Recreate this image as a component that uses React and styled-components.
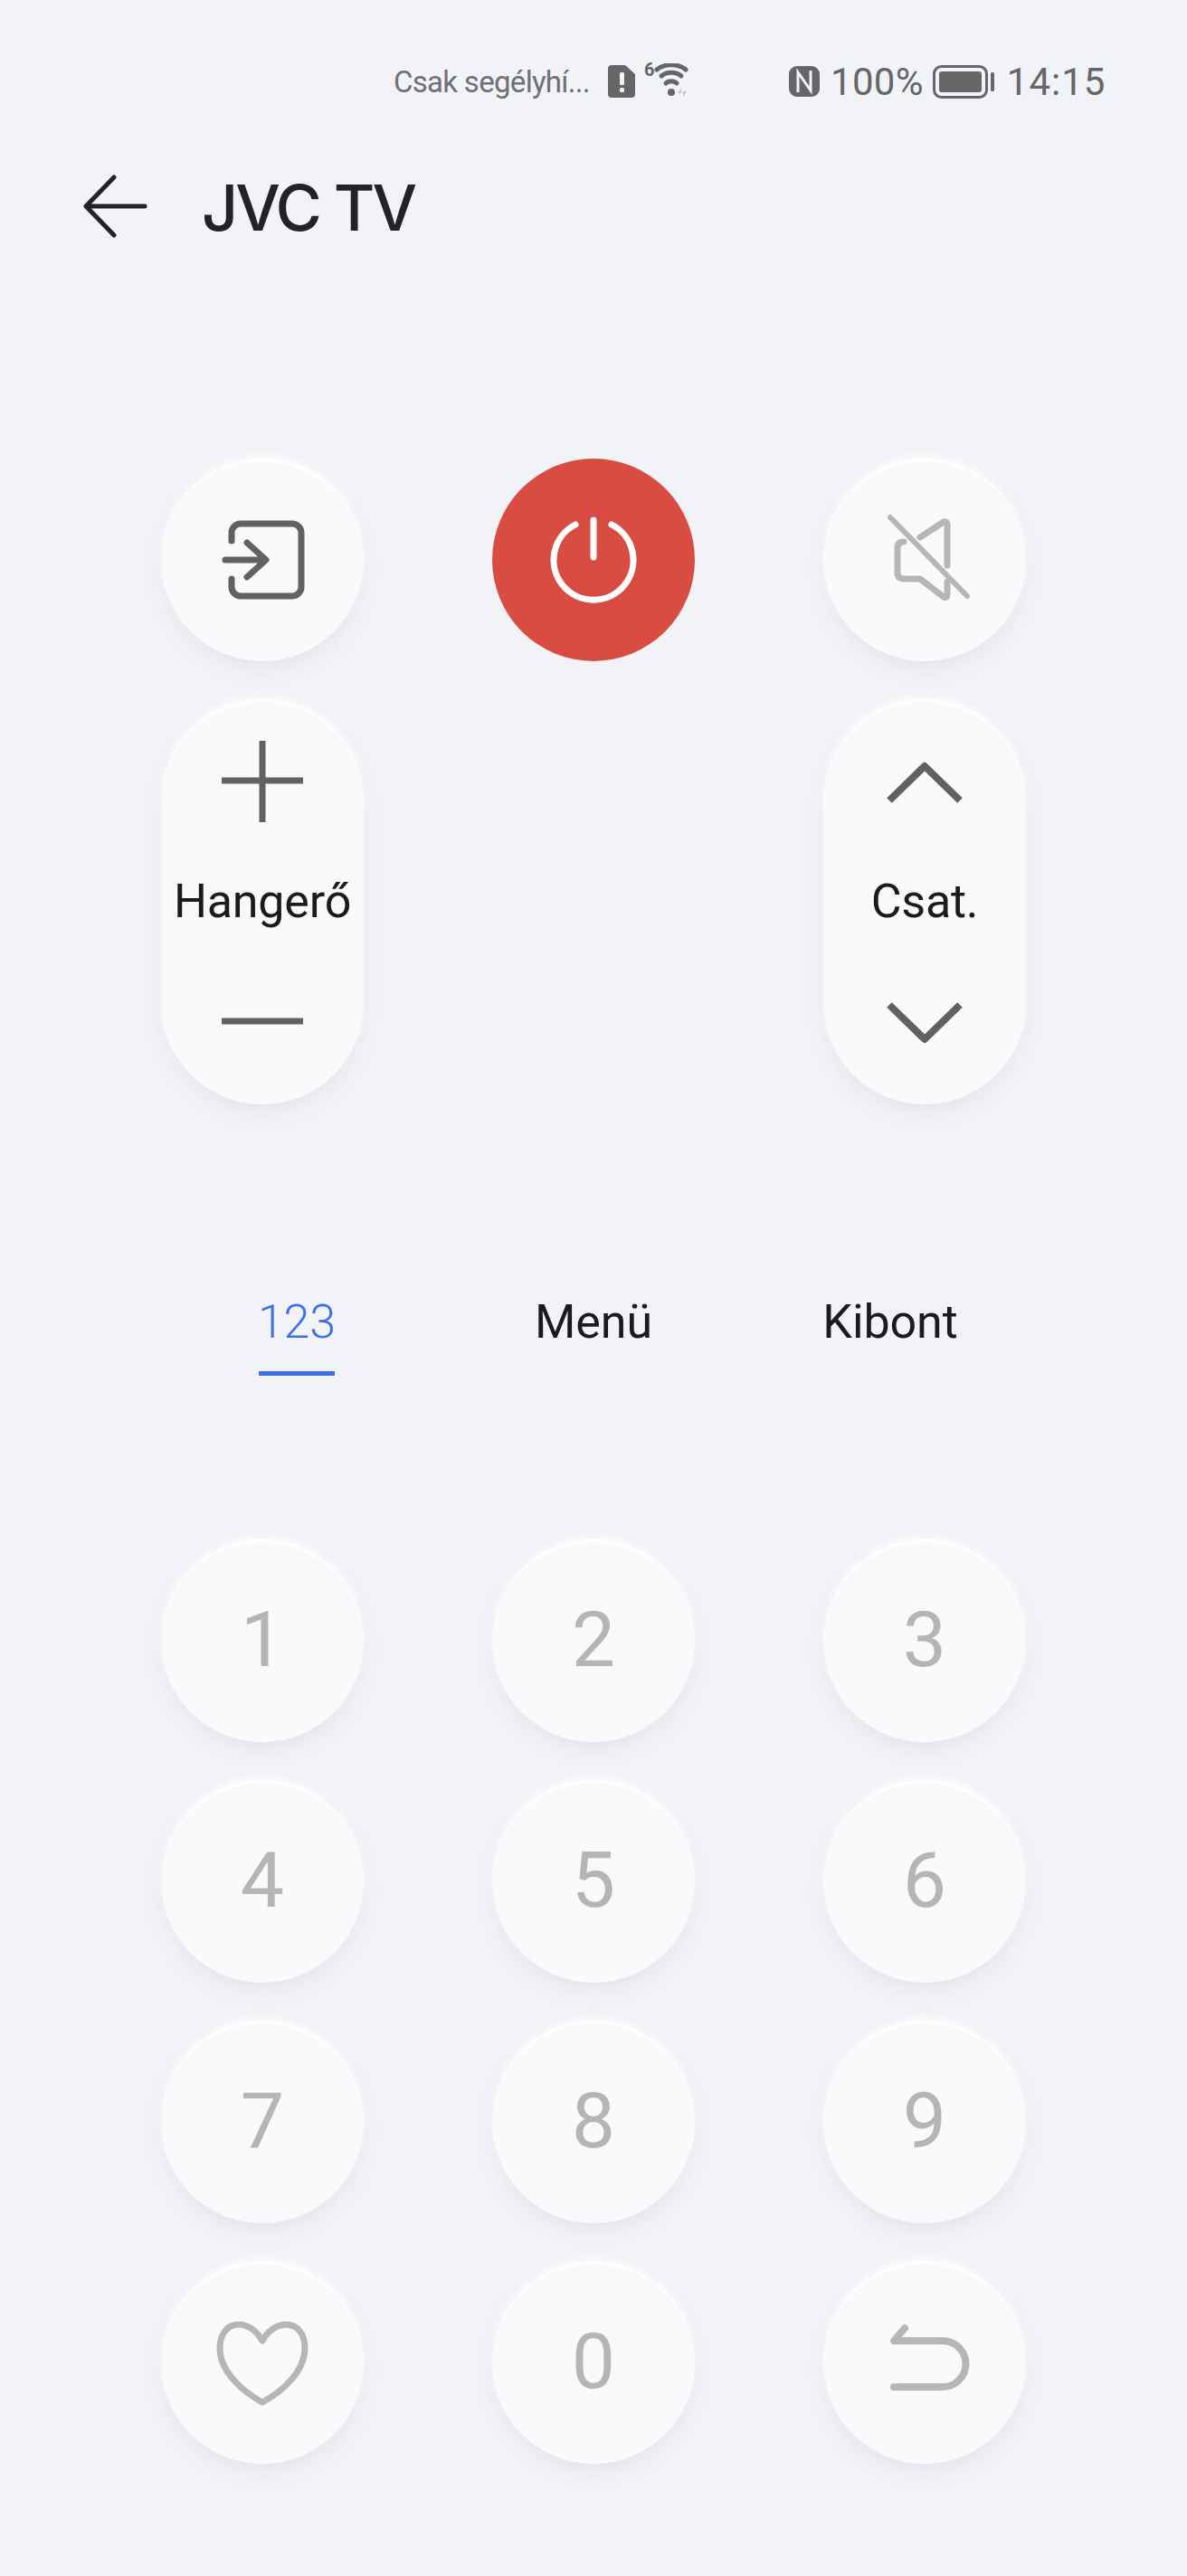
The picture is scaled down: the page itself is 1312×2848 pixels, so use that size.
import React from 'react';
import styled, { createGlobalStyle } from 'styled-components';

const BG = '#f2f3f7';

const Global = createGlobalStyle`
  html, body { margin: 0; padding: 0; background: ${BG}; }
  * { box-sizing: border-box; }
  body { font-family: Roboto, "Liberation Sans", sans-serif; }
`;

const Page = styled.div`
  width: 1312px;
  height: 2848px;
  background: ${BG};
  overflow: hidden;
`;

const StatusBar = styled.div`
  display: flex;
  align-items: center;
  height: 80px;
  margin-top: 50px;
  padding-left: 435px;
  color: #646668;
`;

const StatusNote = styled.span`
  font-size: 33px;
  letter-spacing: -0.7px;
  width: 237px;
  color: #6e7073;
  white-space: nowrap;
`;

const StatusText = styled.span`
  font-size: 42px;
  font-weight: 400;
  letter-spacing: ${p => p.$ls || 0}px;
  margin-left: ${p => p.$ml || 0}px;
  white-space: nowrap;
`;

const StatusIcon = styled.svg`
  display: block;
  flex: none;
  margin-left: ${p => p.$ml || 0}px;
`;

const WifiBox = styled.div`
  position: relative;
  width: 50px;
  height: 40px;
  margin-left: 10px;
  flex: none;
`;

const WifiSix = styled.span`
  position: absolute;
  left: 0;
  top: -5px;
  font-size: 20px;
  font-weight: 700;
  color: #646668;
`;

const Header = styled.header`
  display: flex;
  align-items: center;
  height: 100px;
  margin-top: 48px;
  padding-left: 90px;
`;

const Title = styled.h1`
  margin: 2px 0 0 59px;
  font-family: Inter, sans-serif;
  font-size: 70px;
  font-weight: 500;
  letter-spacing: -2.9px;
  color: #222324;
`;

const Controls = styled.section`
  display: grid;
  grid-template-columns: repeat(3, 224px);
  grid-template-rows: 224px 448px;
  column-gap: 142px;
  row-gap: 42px;
  margin-top: 229px;
  padding-left: 178px;
`;

const face = `
  background: linear-gradient(180deg, #f8f9fb 0%, #f9fafc 100%);
  box-shadow: inset 0 4px 3px -1px #ffffff, 0 -4px 10px rgba(255,255,255,.7), 0 10px 22px rgba(0,0,0,.05), 0 2px 5px rgba(0,0,0,.02);
`;

const RoundButton = styled.button`
  width: 224px;
  height: 224px;
  padding: 0;
  border: 0;
  border-radius: 50%;
  display: flex;
  align-items: center;
  justify-content: center;
  ${face}
`;

const PowerButton = styled(RoundButton)`
  background: #d94c42;
  box-shadow: none;
`;

const Pill = styled.div`
  grid-column: ${p => p.$col};
  width: 224px;
  border-radius: 112px;
  display: flex;
  flex-direction: column;
  align-items: center;
  justify-content: space-between;
  padding: 32px 0;
  ${face}
`;

const PillLabel = styled.span`
  font-size: 52px;
  letter-spacing: -0.2px;
  line-height: 60px;
  color: #1a1b1c;
`;

const Tabs = styled.nav`
  display: grid;
  grid-template-columns: repeat(3, 1fr);
  justify-items: center;
  align-items: start;
  margin-top: 211px;
  padding: 0 164px;
`;

const Tab = styled.div`
  display: flex;
  flex-direction: column;
  align-items: center;
  font-size: 52px;
  line-height: 60px;
  letter-spacing: -0.1px;
  color: ${p => (p.$active ? '#3d6fe8' : '#1a1b1c')};
  font-weight: ${p => (p.$active ? 300 : 400)};
  &::after {
    content: '';
    display: ${p => (p.$active ? 'block' : 'none')};
    width: 84px;
    height: 5px;
    margin-top: 24px;
    background: #3d6fe8;
  }
`;

const Keypad = styled.section`
  display: grid;
  grid-template-columns: repeat(3, 224px);
  grid-auto-rows: 224px;
  column-gap: 142px;
  row-gap: 42px;
  margin-top: 181px;
  padding-left: 178px;
`;

const Digit = styled(RoundButton)`
  font-family: Roboto, sans-serif;
  font-size: 86px;
  padding-bottom: 3px;
  color: #b3b5b7;
`;

const Icon = ({ children, stroke = '#5f6163', sw = 7 }) => (
  <svg width="120" height="120" viewBox="-60 -60 120 120" fill="none" stroke={stroke} strokeWidth={sw} strokeLinecap="round" strokeLinejoin="round">
    {children}
  </svg>
);

const GRAY = '#b4b6b8';

export default function App() {
  return (
    <Page>
      <Global />
      <StatusBar>
        <StatusNote>Csak segélyhí...</StatusNote>
        <StatusIcon width="30" height="36" viewBox="0 0 30 36">
          <path d="M4 0H19L30 10V32a4 4 0 0 1-4 4H4a4 4 0 0 1-4-4V4a4 4 0 0 1 4-4Z" fill="#646668" />
          <rect x="13" y="8" width="5" height="14" rx="1.5" fill={BG} />
          <rect x="13" y="25" width="5" height="5" rx="1.5" fill={BG} />
        </StatusIcon>
        <WifiBox>
          <WifiSix>6</WifiSix>
          <StatusIcon width="50" height="38" viewBox="0 0 50 38">
            <g fill="none" stroke="#646668" strokeWidth="5" strokeLinecap="round">
              <path d="M14 7C22 0 38 0 46 7" />
              <path d="M19 14C25 9 35 9 41 14" />
              <path d="M24 22C27 19 33 19 36 22" />
            </g>
            <circle cx="30" cy="32" r="4" fill="#646668" />
            <path d="M41 28l-4 5h4v4zM43 28v9l4-6h-4z" fill="#c3c5c7" />
          </StatusIcon>
        </WifiBox>
        <StatusIcon $ml={110} width="34" height="34" viewBox="0 0 34 34">
          <rect width="34" height="34" rx="9" fill="#646668" />
          <path d="M10 29V7L24 27V5" fill="none" stroke={BG} strokeWidth="3" />
        </StatusIcon>
        <StatusText $ml={12} $ls={0.3}>100%</StatusText>
        <StatusIcon $ml={10} width="68" height="37" viewBox="0 0 68 37">
          <rect x="1.5" y="1.5" width="58" height="34" rx="8" fill="none" stroke="#646668" strokeWidth="3" />
          <rect x="7" y="7" width="47" height="23" rx="3" fill="#646668" />
          <rect x="64" y="8" width="4" height="21" rx="1.5" fill="#646668" />
        </StatusIcon>
        <StatusText $ml={14} $ls={1}>14:15</StatusText>
      </StatusBar>

      <Header>
        <svg width="74" height="70" viewBox="0 0 74 70" fill="none" stroke="#222324" strokeWidth="5" strokeLinecap="round" strokeLinejoin="round">
          <path d="M70 35H5M36 3L5 35L36 67" />
        </svg>
        <Title>JVC TV</Title>
      </Header>

      <Controls>
        <RoundButton aria-label="Bemenet">
          <Icon sw={7}>
            <path d="M-34 -21V-30A10 10 0 0 1 -24 -40H33A10 10 0 0 1 43 -30V30A10 10 0 0 1 33 40H-24A10 10 0 0 1 -34 30V21" />
            <path d="M-41 0H3M-17 -19L4 0L-17 19" />
          </Icon>
        </RoundButton>
        <PowerButton aria-label="Bekapcsolás">
          <Icon stroke="#ffffff" sw={7}>
            <path d="M-20 -39A44 44 0 1 0 20 -39" />
            <path d="M0 -44V-3" />
          </Icon>
        </PowerButton>
        <RoundButton aria-label="Némítás">
          <Icon stroke={GRAY} sw={7}>
            <path d="M-5 -25L21 -42Q25 -43 25 -38V6" />
            <path d="M25 24V38Q25 43 21 41L-5 21H-22Q-30 21 -30 14V-13Q-30 -20 -23 -20" />
            <path d="M-38 -47L47 40" strokeWidth="6" />
          </Icon>
        </RoundButton>
        <Pill $col={1}>
          <Icon>
            <path d="M0 -46V44M-45 -2H45" strokeWidth="7" strokeLinecap="butt" />
          </Icon>
          <PillLabel>Hangerő</PillLabel>
          <Icon>
            <path d="M-45 0H45" strokeLinecap="butt" />
          </Icon>
        </Pill>
        <Pill $col={3}>
          <Icon>
            <path d="M-39 20L0 -18L39 20" strokeWidth="8" strokeLinecap="butt" />
          </Icon>
          <PillLabel>Csat.</PillLabel>
          <Icon>
            <path d="M-39 -18L0 20L39 -18" strokeWidth="8" strokeLinecap="butt" />
          </Icon>
        </Pill>
      </Controls>

      <Tabs>
        <Tab $active>123</Tab>
        <Tab>Menü</Tab>
        <Tab>Kibont</Tab>
      </Tabs>

      <Keypad>
        {['1', '2', '3', '4', '5', '6', '7', '8', '9'].map(d => (
          <Digit key={d}>{d}</Digit>
        ))}
        <RoundButton aria-label="Kedvenc">
          <Icon stroke={GRAY} sw={7}>
            <path d="M0 -24C-6 -35 -16 -42 -26 -42C-40 -42 -47 -30 -47 -16C-47 10 -22 32 0 44C22 32 47 10 47 -16C47 -30 40 -42 26 -42C16 -42 6 -35 0 -24Z" />
          </Icon>
        </RoundButton>
        <Digit>0</Digit>
        <RoundButton aria-label="Vissza">
          <Icon stroke={GRAY} sw={8}>
            <path d="M-22 -38L-34 -24H20A25.5 25.5 0 0 1 20 27H-34" />
          </Icon>
        </RoundButton>
      </Keypad>
    </Page>
  );
}
